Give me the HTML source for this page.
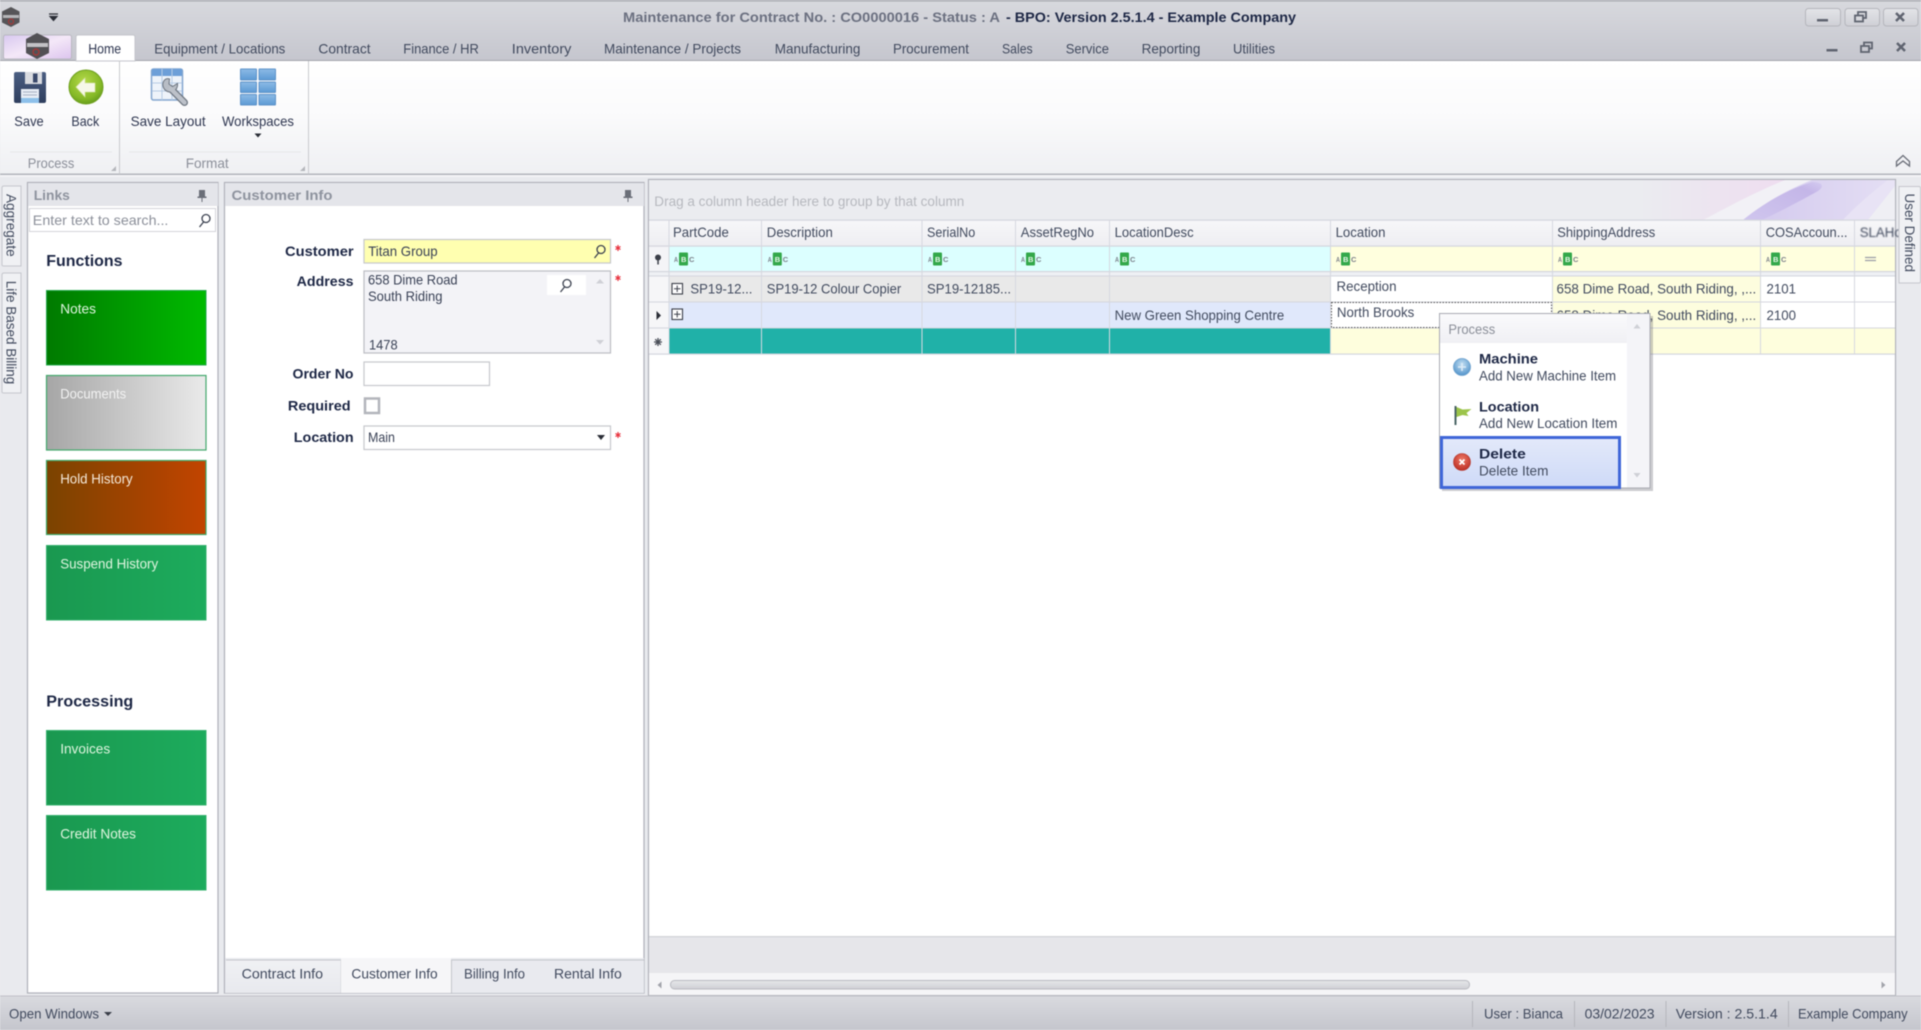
<!DOCTYPE html>
<html lang="en"><head><meta charset="utf-8"><title>Maintenance for Contract</title>
<style>
html,body{margin:0;padding:0;width:1921px;height:1030px;overflow:hidden;background:#e9eaee}
svg{display:block;position:absolute;left:0;top:0;filter:blur(.5px)}
text{font-family:"Liberation Sans",Arial,sans-serif;font-size:14px;fill:#414a5e;white-space:pre}
.b{font-weight:bold;fill:#1d2745}
.g{fill:#8b8f99}
.w{fill:#dff5df;font-size:14px}
.s{font-size:7.500px;font-weight:bold;fill:#7a7f88}
.sw{font-size:7.500px;font-weight:bold;fill:#e8f8ea}
</style></head><body>
<svg width="1921" height="1030" viewBox="0 0 1921 1030" xmlns="http://www.w3.org/2000/svg">
<defs>
<linearGradient id="top" x1="0" y1="0" x2="0" y2="1"><stop offset="0" stop-color="#d8d9de"/><stop offset="1" stop-color="#c5c6ce"/></linearGradient>
<linearGradient id="rib" x1="0" y1="0" x2="0" y2="1"><stop offset="0" stop-color="#ffffff"/><stop offset=".45" stop-color="#fbfbfc"/><stop offset="1" stop-color="#eff0f3"/></linearGradient>
<linearGradient id="stat" x1="0" y1="0" x2="0" y2="1"><stop offset="0" stop-color="#d9dadf"/><stop offset="1" stop-color="#c5c6cd"/></linearGradient>
<linearGradient id="btn" x1="0" y1="0" x2="0" y2="1"><stop offset="0" stop-color="#e3e4e8"/><stop offset="1" stop-color="#cfd0d6"/></linearGradient>
<linearGradient id="app" x1="0" y1="0" x2="1" y2="1"><stop offset="0" stop-color="#d8c8f0"/><stop offset=".5" stop-color="#f4e8f8"/><stop offset="1" stop-color="#dcc4ee"/></linearGradient>
<linearGradient id="t1"><stop offset="0" stop-color="#007a00"/><stop offset="1" stop-color="#00bb00"/></linearGradient>
<linearGradient id="t2"><stop offset="0" stop-color="#a6a6a6"/><stop offset="1" stop-color="#eaeaea"/></linearGradient>
<linearGradient id="t3"><stop offset="0" stop-color="#7a4300"/><stop offset="1" stop-color="#c24400"/></linearGradient>
<linearGradient id="t4"><stop offset="0" stop-color="#1a9850"/><stop offset="1" stop-color="#1dac5d"/></linearGradient>
<linearGradient id="hdr" x1="0" y1="0" x2="0" y2="1"><stop offset="0" stop-color="#f7f7f9"/><stop offset="1" stop-color="#eeeef2"/></linearGradient>
<linearGradient id="sel" x1="0" y1="0" x2="0" y2="1"><stop offset="0" stop-color="#e3e9fa"/><stop offset="1" stop-color="#cedaf8"/></linearGradient>
<linearGradient id="mh" x1="0" y1="0" x2="0" y2="1"><stop offset="0" stop-color="#fafafc"/><stop offset="1" stop-color="#f0f0f4"/></linearGradient>
<linearGradient id="tab" x1="0" y1="0" x2="0" y2="1"><stop offset="0" stop-color="#f0f1f4"/><stop offset="1" stop-color="#e8e9ee"/></linearGradient>
<linearGradient id="thumb" x1="0" y1="0" x2="0" y2="1"><stop offset="0" stop-color="#e6e7ea"/><stop offset="1" stop-color="#cfd0d5"/></linearGradient>
<radialGradient id="grn" cx=".45" cy=".35" r=".7"><stop offset="0" stop-color="#b5d94a"/><stop offset=".7" stop-color="#85b926"/><stop offset="1" stop-color="#5f961a"/></radialGradient>
<radialGradient id="blu" cx=".5" cy=".35" r=".7"><stop offset="0" stop-color="#c4dff2"/><stop offset="1" stop-color="#4a8ec8"/></radialGradient>
<radialGradient id="red" cx=".5" cy=".35" r=".7"><stop offset="0" stop-color="#ee7a68"/><stop offset="1" stop-color="#b8281e"/></radialGradient>
<linearGradient id="flop" x1="0" y1="0" x2="0" y2="1"><stop offset="0" stop-color="#4b5e82"/><stop offset="1" stop-color="#2e3e5e"/></linearGradient>
<linearGradient id="tile" x1="0" y1="0" x2="0" y2="1"><stop offset="0" stop-color="#8dbbe6"/><stop offset="1" stop-color="#5c9ad4"/></linearGradient>
<linearGradient id="pk" x1="0" y1="0" x2="1" y2="0"><stop offset="0" stop-color="#ebecf0"/><stop offset="1" stop-color="#efdcf0"/></linearGradient>
<linearGradient id="lav" x1="0" y1="0" x2="1" y2="0"><stop offset="0" stop-color="#d2c8ee"/><stop offset="1" stop-color="#e4def4"/></linearGradient>
<linearGradient id="deep" x1="0" y1="1" x2="1" y2="0"><stop offset="0" stop-color="#d0c6ee"/><stop offset=".8" stop-color="#c4b6e8"/><stop offset="1" stop-color="#d4cbf0"/></linearGradient>
</defs>

<!-- base -->
<rect width="1921" height="1030" fill="#e9eaee"/>
<rect width="1921" height="61" fill="url(#top)"/>
<rect width="1921" height="1.500" fill="#a9abb1"/>
<rect y="60" width="1921" height="1.200" fill="#a3a5ac"/>
<rect y="61" width="1921" height="113" fill="url(#rib)"/>
<rect y="173.500" width="1921" height="1.500" fill="#b3b5bb"/>
<rect y="175" width="1921" height="2" fill="#f3f3f6"/>

<!-- title icons -->
<path d="M11 7l8.500 4.500v11L11 27l-9-4.500v-11z" fill="#565558"/>
<rect x="3" y="15" width="16" height="3" fill="#b5b5b8"/>
<circle cx="11" cy="21.500" r="2.500" fill="none" stroke="#a33a3a" stroke-width="1.200"/>
<path d="M49 14h9M50 16.500h7l-3.500 4z" stroke="#2a2d36" stroke-width="1.200" fill="#2a2d36"/>

<!-- title -->
<text x="623" y="22" class="b" style="fill:#6b7080;font-size:14px" textLength="377" lengthAdjust="spacingAndGlyphs">Maintenance for Contract No. : CO0000016 - Status : A</text>
<text x="1006" y="22" class="b" style="font-size:14px" textLength="290" lengthAdjust="spacingAndGlyphs">- BPO: Version 2.5.1.4 - Example Company</text>

<!-- window buttons -->
<rect x="1805.500" y="8.500" width="35" height="17.500" rx="3" fill="url(#btn)" stroke="#b5b6bc"/>
<rect x="1845" y="8.500" width="34.500" height="17.500" rx="3" fill="url(#btn)" stroke="#b5b6bc"/>
<rect x="1883.500" y="8.500" width="34.500" height="17.500" rx="3" fill="url(#btn)" stroke="#b5b6bc"/>
<rect x="1817" y="19" width="11" height="2.500" fill="#5f6470"/>
<g fill="none" stroke="#5f6470" stroke-width="1.800"><rect x="1855" y="15.500" width="8" height="6"/><path d="M1858 15v-3h8v6h-3"/></g>
<path d="M1896 13l8 8M1904 13l-8 8" stroke="#5f6470" stroke-width="2.500"/>
<rect x="1826.500" y="49" width="11" height="2.500" fill="#5f6470"/>
<g fill="none" stroke="#5f6470" stroke-width="1.800"><rect x="1861" y="46" width="8" height="6"/><path d="M1864 45.500v-3h8v6h-3"/></g>
<path d="M1897 43l8 8M1905 43l-8 8" stroke="#5f6470" stroke-width="2.500"/>

<!-- app button + home tab -->
<rect x="3.500" y="35" width="68" height="24" rx="2" fill="url(#app)" stroke="#b8b8c0"/>
<path d="M37 33l12 6v14l-12 6-11-6V39z" fill="#525155"/>
<rect x="27" y="43" width="21" height="4" fill="#c2c2c5"/>
<circle cx="36" cy="52" r="3" fill="none" stroke="#a33a3a" stroke-width="1.400"/>
<path d="M76 61V37q0-2 2-2h55q2 0 2 2v24z" fill="#fff" stroke="#c4c5cb"/>

<!-- tabs -->
<text x="88.200" y="53.500" style="fill:#2e3650" textLength="33" lengthAdjust="spacingAndGlyphs">Home</text>
<text x="154.300" y="53.500" textLength="131" lengthAdjust="spacingAndGlyphs">Equipment / Locations</text>
<text x="318.400" y="53.500" textLength="52.200" lengthAdjust="spacingAndGlyphs">Contract</text>
<text x="403.300" y="53.500" textLength="75.500" lengthAdjust="spacingAndGlyphs">Finance / HR</text>
<text x="511.800" y="53.500" textLength="59.600" lengthAdjust="spacingAndGlyphs">Inventory</text>
<text x="604" y="53.500" textLength="137" lengthAdjust="spacingAndGlyphs">Maintenance / Projects</text>
<text x="774.700" y="53.500" textLength="85.700" lengthAdjust="spacingAndGlyphs">Manufacturing</text>
<text x="893" y="53.500" textLength="76" lengthAdjust="spacingAndGlyphs">Procurement</text>
<text x="1002" y="53.500" textLength="30.700" lengthAdjust="spacingAndGlyphs">Sales</text>
<text x="1065.700" y="53.500" textLength="43.300" lengthAdjust="spacingAndGlyphs">Service</text>
<text x="1141.600" y="53.500" textLength="58.800" lengthAdjust="spacingAndGlyphs">Reporting</text>
<text x="1233" y="53.500" textLength="42" lengthAdjust="spacingAndGlyphs">Utilities</text>

<!-- ribbon separators -->
<rect x="119" y="61" width="1" height="113" fill="#c9cace"/>
<rect x="308" y="61" width="1" height="113" fill="#c9cace"/>
<rect x="10" y="151.500" width="102" height="1" fill="#e6e7ea"/>
<rect x="129" y="151.500" width="172" height="1" fill="#e6e7ea"/>
<path d="M116 166v5h-5zM305 166v5h-5z" fill="#b4b6bb"/>
<path d="M1896.500 161.500l6.500-6 6.500 6v4.500l-6.500-5-6.500 5z" fill="none" stroke="#6a6e78" stroke-width="1.300"/>

<!-- save icon -->
<rect x="14" y="72" width="32" height="31" rx="2" fill="url(#flop)"/>
<rect x="25" y="72" width="17" height="12" fill="#d9dbe0"/>
<rect x="33" y="73.500" width="4.500" height="9" fill="#39486a"/>
<rect x="21" y="89" width="18" height="14" fill="#e8edf5"/>
<rect x="21" y="98" width="18" height="5" fill="#8dc0ea"/>
<path d="M23 92h14M23 95h14" stroke="#a5b0c4"/>
<!-- back icon -->
<circle cx="86" cy="87" r="17" fill="url(#grn)" stroke="#6fa020"/>
<path d="M76 87l9-9v5h10v9H85v5z" fill="#f6f8e8" stroke="#d8e4a8" stroke-width=".6"/>
<!-- save layout -->
<rect x="151.500" y="69" width="31" height="31" rx="2" fill="#eef3fa" stroke="#84a6cf" stroke-width="1.500"/>
<rect x="152" y="69" width="30" height="7" fill="#6d9fd8"/>
<path d="M152 83h30M152 91h30M162 69v31M172 69v31" stroke="#b7cbe4"/>
<path d="M171 89l13.500 13.500" stroke="#6d7580" stroke-width="7" stroke-linecap="round"/>
<path d="M163.500 81.500c-1.800 4 0 9.500 6 10.500 5 .6 8.500-3.500 8-8.500l-5 3-3.500-2.500.5-5c-2.500-1-4.500 0-6 2.500z" fill="#b8bdc5" stroke="#6d7580" stroke-width="1"/>
<path d="M171 89l13.500 13.500" stroke="#bcc1c9" stroke-width="4.500" stroke-linecap="round"/>
<!-- workspaces -->
<g fill="url(#tile)" stroke="#5e93c9">
<rect x="240.500" y="69" width="16" height="11" rx=".5"/><rect x="259" y="69" width="16.500" height="11" rx=".5"/>
<rect x="240.500" y="82" width="16" height="10.500" rx=".5"/><rect x="259" y="82" width="16.500" height="10.500" rx=".5"/>
<rect x="240.500" y="94.500" width="16" height="10.500" rx=".5"/><rect x="259" y="94.500" width="16.500" height="10.500" rx=".5"/>
</g>
<path d="M254.500 133.500h7l-3.500 4z" fill="#2a2d36"/>

<text x="14.300" y="126" textLength="29.400" lengthAdjust="spacingAndGlyphs" style="fill:#2e3650">Save</text>
<text x="71.400" y="126" textLength="27.800" lengthAdjust="spacingAndGlyphs" style="fill:#2e3650">Back</text>
<text x="130.600" y="126" textLength="75" lengthAdjust="spacingAndGlyphs" style="fill:#2e3650">Save Layout</text>
<text x="222" y="126" textLength="72" lengthAdjust="spacingAndGlyphs" style="fill:#2e3650">Workspaces</text>
<text x="27.800" y="168" class="g" textLength="46.500" lengthAdjust="spacingAndGlyphs">Process</text>
<text x="185.700" y="168" class="g" textLength="43" lengthAdjust="spacingAndGlyphs">Format</text>

<!-- left vertical tabs -->
<path d="M21 186H4q-2 0-2 2v77q0 1 2 1h17z" fill="#f0f1f4" stroke="#c5c6cc"/>
<path d="M21 273H4q-2 0-2 2v117q0 1 2 1h17z" fill="#f0f1f4" stroke="#c5c6cc"/>
<text transform="translate(6.500,194) rotate(90)" textLength="62.700" lengthAdjust="spacingAndGlyphs">Aggregate</text>
<text transform="translate(6.500,280.700) rotate(90)" textLength="103.500" lengthAdjust="spacingAndGlyphs">Life Based Billing</text>

<!-- links panel -->
<rect x="27.500" y="182.500" width="190.500" height="810.500" fill="#fff" stroke="#aeb0b8" stroke-width="1.200"/>
<rect x="28" y="183" width="190" height="23" fill="#e4e5ea"/>
<text x="33.700" y="200" class="b" style="fill:#8e939e" textLength="36.200" lengthAdjust="spacingAndGlyphs">Links</text>
<g fill="#6a6e78"><rect x="199" y="190" width="6" height="7"/><rect x="197.500" y="196.500" width="9" height="1.500"/><rect x="201.500" y="198" width="1" height="4"/></g>
<rect x="29.500" y="208.500" width="186" height="23" fill="#fff" stroke="#d4d5da"/>
<text x="32.800" y="225" style="fill:#8c909a" textLength="135.600" lengthAdjust="spacingAndGlyphs">Enter text to search...</text>
<g fill="none" stroke="#3c4250" stroke-width="1.300"><circle cx="206" cy="218.500" r="4"/><path d="M203.500 222l-4 5"/></g>

<text x="46.300" y="266" class="b" style="font-size:16px" textLength="76.200" lengthAdjust="spacingAndGlyphs">Functions</text>
<rect x="46.500" y="290.500" width="159.500" height="74.500" fill="url(#t1)" stroke="#22a84a"/>
<rect x="46.500" y="375.500" width="159.500" height="74.500" fill="url(#t2)" stroke="#43a86c" stroke-width="1.200"/>
<rect x="46.500" y="460.500" width="159.500" height="74" fill="url(#t3)" stroke="#3fa868" stroke-width="1.200"/>
<rect x="46.500" y="545.500" width="159.500" height="74.500" fill="url(#t4)" stroke="#33b06c"/>
<text x="46.300" y="706.500" class="b" style="font-size:16px" textLength="87" lengthAdjust="spacingAndGlyphs">Processing</text>
<rect x="46.500" y="730.500" width="159.500" height="74.500" fill="url(#t4)" stroke="#33b06c"/>
<rect x="46.500" y="815.500" width="159.500" height="74.500" fill="url(#t4)" stroke="#33b06c"/>
<text x="60.200" y="313.500" class="w" textLength="35.800" lengthAdjust="spacingAndGlyphs">Notes</text>
<text x="60.200" y="398.500" class="w" style="fill:#f2f2f2" textLength="66" lengthAdjust="spacingAndGlyphs">Documents</text>
<text x="60.200" y="483.500" class="w" style="fill:#f5e8d8" textLength="72.500" lengthAdjust="spacingAndGlyphs">Hold History</text>
<text x="60.200" y="568.500" class="w" textLength="98" lengthAdjust="spacingAndGlyphs">Suspend History</text>
<text x="60.200" y="753.500" class="w" textLength="50" lengthAdjust="spacingAndGlyphs">Invoices</text>
<text x="60.200" y="838.500" class="w" textLength="75.800" lengthAdjust="spacingAndGlyphs">Credit Notes</text>

<!-- customer info panel -->
<rect x="224.500" y="182.500" width="419.500" height="810.500" fill="#fff" stroke="#aeb0b8" stroke-width="1.200"/>
<rect x="225" y="183" width="419" height="23" fill="#e4e5ea"/>
<text x="231.500" y="200" class="b" style="fill:#8e939e" textLength="101" lengthAdjust="spacingAndGlyphs">Customer Info</text>
<g fill="#6a6e78"><rect x="625" y="190" width="6" height="7"/><rect x="623.500" y="196.500" width="9" height="1.500"/><rect x="627.500" y="198" width="1" height="4"/></g>

<text x="285" y="256" class="b" textLength="68.600" lengthAdjust="spacingAndGlyphs">Customer</text>
<text x="296.700" y="286" class="b" textLength="56.800" lengthAdjust="spacingAndGlyphs">Address</text>
<text x="292.500" y="378.500" class="b" textLength="61" lengthAdjust="spacingAndGlyphs">Order No</text>
<text x="287.900" y="410.500" class="b" textLength="62.700" lengthAdjust="spacingAndGlyphs">Required</text>
<text x="293.800" y="442" class="b" textLength="59.800" lengthAdjust="spacingAndGlyphs">Location</text>

<rect x="364" y="239.500" width="246.500" height="23.500" fill="#ffffb0" stroke="#c6c7cc" stroke-width="1.200"/>
<text x="368.200" y="256" style="fill:#3a4256" textLength="69.400" lengthAdjust="spacingAndGlyphs">Titan Group</text>
<g fill="none" stroke="#3c4250" stroke-width="1.300"><circle cx="601" cy="249.500" r="4"/><path d="M598.500 253l-4 5"/></g>

<rect x="364" y="271" width="246.500" height="82" fill="#f3f3f7" stroke="#bcbdc3" stroke-width="1.200"/>
<text x="368" y="284.500" style="fill:#3a4256" textLength="89.600" lengthAdjust="spacingAndGlyphs">658 Dime Road</text>
<text x="368" y="301" style="fill:#3a4256" textLength="74.500" lengthAdjust="spacingAndGlyphs">South Riding</text>
<text x="369" y="349.500" style="fill:#3a4256" textLength="28.600" lengthAdjust="spacingAndGlyphs">1478</text>
<rect x="547" y="275" width="39" height="20" fill="#fff"/>
<g fill="none" stroke="#3c4250" stroke-width="1.300"><circle cx="567" cy="283.500" r="4"/><path d="M564.500 287l-4 5"/></g>
<path d="M596 283.500h8l-4-4.500zM596 340h8l-4 4.500z" fill="#cfd0d6"/>

<rect x="364" y="362" width="125.500" height="23.500" fill="#fff" stroke="#c6c7cc" stroke-width="1.200"/>
<rect x="365" y="398.500" width="14" height="14.500" fill="#fff" stroke="#b3b5bb" stroke-width="2.500"/>
<rect x="364" y="426" width="246.500" height="23.500" fill="#fff" stroke="#c6c7cc" stroke-width="1.200"/>
<text x="368" y="442" style="fill:#3a4256" textLength="27" lengthAdjust="spacingAndGlyphs">Main</text>
<path d="M597 435h8l-4 5z" fill="#2a2d36"/>

<g fill="none" stroke="#e8303c" stroke-width="1.200"><path d="M618 245v6M615.500 246.500l5 3M620.500 246.500l-5 3M618 275v6M615.500 276.500l5 3M620.500 276.500l-5 3M618 432v6M615.500 433.500l5 3M620.500 433.500l-5 3"/></g>

<!-- bottom tabs -->
<rect x="225" y="958" width="419" height="35" fill="#e9eaef"/>
<rect x="226" y="960" width="115" height="33" fill="url(#tab)"/>
<rect x="226" y="959.500" width="115" height="1" fill="#c4c6cc"/>
<rect x="340.500" y="960" width="1" height="33" fill="#d0d1d6"/>
<rect x="341" y="958" width="110" height="35" fill="#f6f6f8"/>
<rect x="451" y="960" width="1" height="33" fill="#c4c6cc"/>
<rect x="451" y="959.500" width="193" height="1" fill="#c4c6cc"/>
<text x="241.600" y="978.500" textLength="81.400" lengthAdjust="spacingAndGlyphs">Contract Info</text>
<text x="351.400" y="978.500" textLength="86.300" lengthAdjust="spacingAndGlyphs">Customer Info</text>
<text x="464" y="978.500" textLength="61" lengthAdjust="spacingAndGlyphs">Billing Info</text>
<text x="554" y="978.500" textLength="67.800" lengthAdjust="spacingAndGlyphs">Rental Info</text>

<!-- grid panel -->
<rect x="648.500" y="179.500" width="1247" height="816" fill="#fff" stroke="#aeb0b8" stroke-width="1.200"/>
<rect x="649" y="180" width="1246" height="40" fill="#ebecf0"/>
<!-- swoosh -->
<rect x="1640" y="180" width="155" height="40" fill="url(#pk)"/>
<path d="M1703 220C1735 203 1760 190 1785 180H1812C1792 188 1768 200 1743 220Z" fill="#f2f1f6"/>
<path d="M1743 220C1768 200 1792 188 1812 180H1888C1870 194 1855 207 1843 220Z" fill="url(#lav)"/>
<path d="M1743 220C1768 200 1790 189 1812 182C1822 182 1825 186 1818 191C1800 201 1785 209 1762 220Z" fill="url(#deep)"/>
<path d="M1843 220C1855 207 1870 194 1888 180H1895V186L1868 220Z" fill="#e8e3f5"/>
<path d="M1868 220L1895 186V220Z" fill="#efeff4"/>
<text x="654.300" y="206" style="fill:#b6b8be" textLength="310" lengthAdjust="spacingAndGlyphs">Drag a column header here to group by that column</text>

<!-- header row -->
<rect x="649" y="220" width="1246" height="26" fill="url(#hdr)"/>
<!-- filter row -->
<rect x="649" y="246" width="20" height="25.500" fill="#f4f4f7"/>
<rect x="669" y="246.500" width="661.500" height="25" fill="#dcffff"/>
<rect x="1330.500" y="246.500" width="564.500" height="25" fill="#ffffde"/>
<!-- separator -->
<rect x="649" y="271.500" width="1246" height="4.500" fill="#eef0f4"/>
<!-- rows -->
<rect x="649" y="276" width="20" height="78" fill="#f6f6f8"/>
<rect x="669" y="276" width="661.500" height="26" fill="#e9e9e9"/>
<rect x="1330.500" y="276" width="222" height="26" fill="#fff"/>
<rect x="1552" y="276" width="208" height="26" fill="#fdfdde"/>
<rect x="1760" y="276" width="135" height="26" fill="#fff"/>
<rect x="669" y="302" width="661.500" height="26" fill="#e0e8fb"/>
<rect x="1330.500" y="302" width="222" height="26" fill="#fff"/>
<rect x="1552" y="302" width="208" height="26" fill="#fdfdde"/>
<rect x="1760" y="302" width="135" height="26" fill="#fff"/>
<rect x="669" y="328" width="661.500" height="26" fill="#20b1a8"/>
<rect x="1330.500" y="328" width="564.500" height="26" fill="#fefedd"/>

<!-- horizontal grid lines -->
<g fill="#d4d6de">
<rect x="649" y="219.500" width="1246" height="1.200"/>
<rect x="649" y="245.500" width="1246" height="1.200"/>
<rect x="649" y="271" width="1246" height="1.200"/>
<rect x="649" y="275.500" width="1246" height="1"/>
<rect x="649" y="301.500" width="1246" height="1"/>
<rect x="649" y="327.500" width="1246" height="1"/>
<rect x="649" y="353.500" width="1246" height="1.200"/>
</g>
<!-- vertical grid lines -->
<g fill="#d6d8e0">
<rect x="668.500" y="220" width="1" height="134"/><rect x="761" y="220" width="1" height="134"/>
<rect x="921.500" y="220" width="1" height="134"/><rect x="1015" y="220" width="1" height="134"/>
<rect x="1109" y="220" width="1" height="134"/><rect x="1330" y="220" width="1" height="134"/>
<rect x="1552" y="220" width="1" height="134"/><rect x="1760" y="220" width="1" height="134"/>
<rect x="1854" y="220" width="1" height="134"/>
</g>

<!-- header text -->
<text x="673" y="237" textLength="55.800" lengthAdjust="spacingAndGlyphs">PartCode</text>
<text x="766.800" y="237" textLength="66" lengthAdjust="spacingAndGlyphs">Description</text>
<text x="927" y="237" textLength="48.200" lengthAdjust="spacingAndGlyphs">SerialNo</text>
<text x="1020.800" y="237" textLength="73.200" lengthAdjust="spacingAndGlyphs">AssetRegNo</text>
<text x="1114.600" y="237" textLength="79" lengthAdjust="spacingAndGlyphs">LocationDesc</text>
<text x="1335.600" y="237" textLength="49.900" lengthAdjust="spacingAndGlyphs">Location</text>
<text x="1557.200" y="237" textLength="98" lengthAdjust="spacingAndGlyphs">ShippingAddress</text>
<text x="1765.700" y="237" textLength="81.800" lengthAdjust="spacingAndGlyphs">COSAccoun...</text>
<svg x="1855" y="222" width="40" height="24"><text x="4.700" y="15" textLength="42" lengthAdjust="spacingAndGlyphs">SLAHo</text></svg>

<!-- ABC filter icons -->
<g>
<rect x="679" y="252.500" width="9" height="13" rx="1" fill="#33a84a"/><text x="674" y="262" class="s" textLength="4" lengthAdjust="spacingAndGlyphs">A</text><text x="681" y="262" class="sw">B</text><text x="689" y="262" class="s">C</text>
<rect x="772.800" y="252.500" width="9" height="13" rx="1" fill="#33a84a"/><text x="767.800" y="262" class="s" textLength="4" lengthAdjust="spacingAndGlyphs">A</text><text x="774.800" y="262" class="sw">B</text><text x="782.800" y="262" class="s">C</text>
<rect x="933" y="252.500" width="9" height="13" rx="1" fill="#33a84a"/><text x="928" y="262" class="s" textLength="4" lengthAdjust="spacingAndGlyphs">A</text><text x="935" y="262" class="sw">B</text><text x="943" y="262" class="s">C</text>
<rect x="1026" y="252.500" width="9" height="13" rx="1" fill="#33a84a"/><text x="1021" y="262" class="s" textLength="4" lengthAdjust="spacingAndGlyphs">A</text><text x="1028" y="262" class="sw">B</text><text x="1036" y="262" class="s">C</text>
<rect x="1120" y="252.500" width="9" height="13" rx="1" fill="#33a84a"/><text x="1115" y="262" class="s" textLength="4" lengthAdjust="spacingAndGlyphs">A</text><text x="1122" y="262" class="sw">B</text><text x="1130" y="262" class="s">C</text>
<rect x="1341" y="252.500" width="9" height="13" rx="1" fill="#33a84a"/><text x="1336" y="262" class="s" textLength="4" lengthAdjust="spacingAndGlyphs">A</text><text x="1343" y="262" class="sw">B</text><text x="1351" y="262" class="s">C</text>
<rect x="1563" y="252.500" width="9" height="13" rx="1" fill="#33a84a"/><text x="1558" y="262" class="s" textLength="4" lengthAdjust="spacingAndGlyphs">A</text><text x="1565" y="262" class="sw">B</text><text x="1573" y="262" class="s">C</text>
<rect x="1771" y="252.500" width="9" height="13" rx="1" fill="#33a84a"/><text x="1766" y="262" class="s" textLength="4" lengthAdjust="spacingAndGlyphs">A</text><text x="1773" y="262" class="sw">B</text><text x="1781" y="262" class="s">C</text>
</g>
<path d="M1865 257.500h11M1865 260.500h11" stroke="#9a9da6" stroke-width="1.200"/>

<!-- indicators -->
<circle cx="658" cy="257.500" r="3" fill="#3a3e48"/><rect x="657.300" y="259" width="1.500" height="5.500" fill="#3a3e48"/>
<path d="M656.500 311l4.500 4.500-4.500 4.500z" fill="#2a2d36"/>
<g stroke="#4a4e58" stroke-width="1.300"><path d="M658 338v8M654 342h8M655.200 339.200l5.600 5.600M660.800 339.200l-5.600 5.600"/></g>

<!-- plus boxes -->
<g fill="#fff" stroke="#3a3e48" stroke-width="1.100">
<rect x="672" y="283.500" width="10.500" height="10.500"/><rect x="672" y="309" width="10.500" height="10.500"/>
</g>
<path d="M674 288.700h6.500M677.200 285.500v6.500M674 314.200h6.500M677.200 311v6.500" stroke="#3a3e48" stroke-width="1"/>

<!-- row text -->
<text x="690.400" y="293.500" textLength="62" lengthAdjust="spacingAndGlyphs">SP19-12...</text>
<text x="766.800" y="293.500" textLength="134.400" lengthAdjust="spacingAndGlyphs">SP19-12 Colour Copier</text>
<text x="927" y="293.500" textLength="84" lengthAdjust="spacingAndGlyphs">SP19-12185...</text>
<text x="1114.600" y="320" textLength="169.600" lengthAdjust="spacingAndGlyphs">New Green Shopping Centre</text>
<text x="1336.500" y="291" textLength="60" lengthAdjust="spacingAndGlyphs">Reception</text>
<text x="1336.900" y="317" textLength="77.400" lengthAdjust="spacingAndGlyphs">North Brooks</text>
<rect x="1331.500" y="302.500" width="220" height="25" fill="none" stroke="#555" stroke-width="1" stroke-dasharray="1.500 1.500"/>
<text x="1556.500" y="293.500" textLength="199.700" lengthAdjust="spacingAndGlyphs">658 Dime Road, South Riding, ,...</text>
<text x="1556.500" y="320" textLength="199.700" lengthAdjust="spacingAndGlyphs">658 Dime Road, South Riding, ,...</text>
<text x="1766.500" y="293.500" textLength="29.500" lengthAdjust="spacingAndGlyphs">2101</text>
<text x="1766.500" y="320" textLength="29.500" lengthAdjust="spacingAndGlyphs">2100</text>

<!-- grid footer -->
<rect x="649" y="936" width="1246" height="37" fill="#e6e6ea"/>
<rect x="649" y="936" width="1246" height="1.300" fill="#d3d4d9"/>
<rect x="649" y="973" width="1246" height="22" fill="#f5f5f7"/>
<rect x="670.500" y="980.500" width="799" height="8.500" rx="4" fill="url(#thumb)" stroke="#b9bac0"/>
<path d="M661.500 981.500v7l-4-3.500zM1881.500 981.500v7l4-3.500z" fill="#a2a4ab"/>

<!-- user defined tab -->
<path d="M1899 186.500h20q1.500 0 1.500 2V282q0 1-2 1h-19.500z" fill="#f0f1f4" stroke="#c5c6cc"/>
<text transform="translate(1905,193.500) rotate(90)" textLength="78.500" lengthAdjust="spacingAndGlyphs">User Defined</text>

<!-- popup menu -->
<rect x="1442" y="316" width="211" height="175" fill="#6c6e76" opacity=".35"/>
<rect x="1439.500" y="313.500" width="210.500" height="174.500" fill="#fff" stroke="#a8aab2"/>
<rect x="1440" y="314" width="187" height="29" fill="url(#mh)"/>
<rect x="1627" y="314" width="22.500" height="173.500" fill="#f4f4f8"/>
<text x="1448.400" y="334" class="g" textLength="46.800" lengthAdjust="spacingAndGlyphs">Process</text>
<path d="M1633.500 328.500h7l-3.500-4.500zM1633.500 473h7l-3.500 4.500z" fill="#cfd0d6"/>
<circle cx="1462" cy="367" r="8.500" fill="url(#blu)" stroke="#6a9fcc" stroke-width=".8"/>
<path d="M1462 363v8M1458 367h8" stroke="#dcebf7" stroke-width="1.600"/>
<rect x="1454.500" y="406" width="2" height="19" fill="#4a6464"/>
<path d="M1456.500 407l6 2.500 9-.5-5 4 2 3-6-1-6 2z" fill="#9cc44a"/>
<text x="1479" y="363.500" class="b" textLength="59" lengthAdjust="spacingAndGlyphs">Machine</text>
<text x="1479" y="380.500" textLength="137" lengthAdjust="spacingAndGlyphs">Add New Machine Item</text>
<text x="1479" y="411.500" class="b" textLength="60" lengthAdjust="spacingAndGlyphs">Location</text>
<text x="1479" y="428" textLength="138.400" lengthAdjust="spacingAndGlyphs">Add New Location Item</text>
<rect x="1441.500" y="437.500" width="178" height="50" fill="url(#sel)" stroke="#3f66d8" stroke-width="3"/>
<circle cx="1462" cy="462" r="8.500" fill="url(#red)" stroke="#b0342a" stroke-width=".6"/>
<path d="M1459.500 459.500l5 5M1464.500 459.500l-5 5" stroke="#fff" stroke-width="1.800"/>
<text x="1479" y="458.500" class="b" textLength="46.800" lengthAdjust="spacingAndGlyphs">Delete</text>
<text x="1479" y="475.500" textLength="69.400" lengthAdjust="spacingAndGlyphs">Delete Item</text>

<!-- status bar -->
<rect y="996" width="1921" height="34" fill="url(#stat)"/>
<rect y="995.500" width="1921" height="1" fill="#c0c1c7"/>
<text x="9" y="1018.500" textLength="90" lengthAdjust="spacingAndGlyphs">Open Windows</text>
<path d="M104 1012h8l-4 4z" fill="#3a3e48"/>
<g fill="#b5b6bc"><rect x="1472" y="1001" width="1" height="26"/><rect x="1574" y="1001" width="1" height="26"/><rect x="1665.500" y="1001" width="1" height="26"/><rect x="1788" y="1001" width="1" height="26"/></g>
<text x="1484" y="1018.500" textLength="79" lengthAdjust="spacingAndGlyphs">User : Bianca</text>
<text x="1584.600" y="1018.500" textLength="70" lengthAdjust="spacingAndGlyphs">03/02/2023</text>
<text x="1675.700" y="1018.500" textLength="102" lengthAdjust="spacingAndGlyphs">Version : 2.5.1.4</text>
<text x="1798" y="1018.500" textLength="109.600" lengthAdjust="spacingAndGlyphs">Example Company</text>
</svg>
</body></html>
